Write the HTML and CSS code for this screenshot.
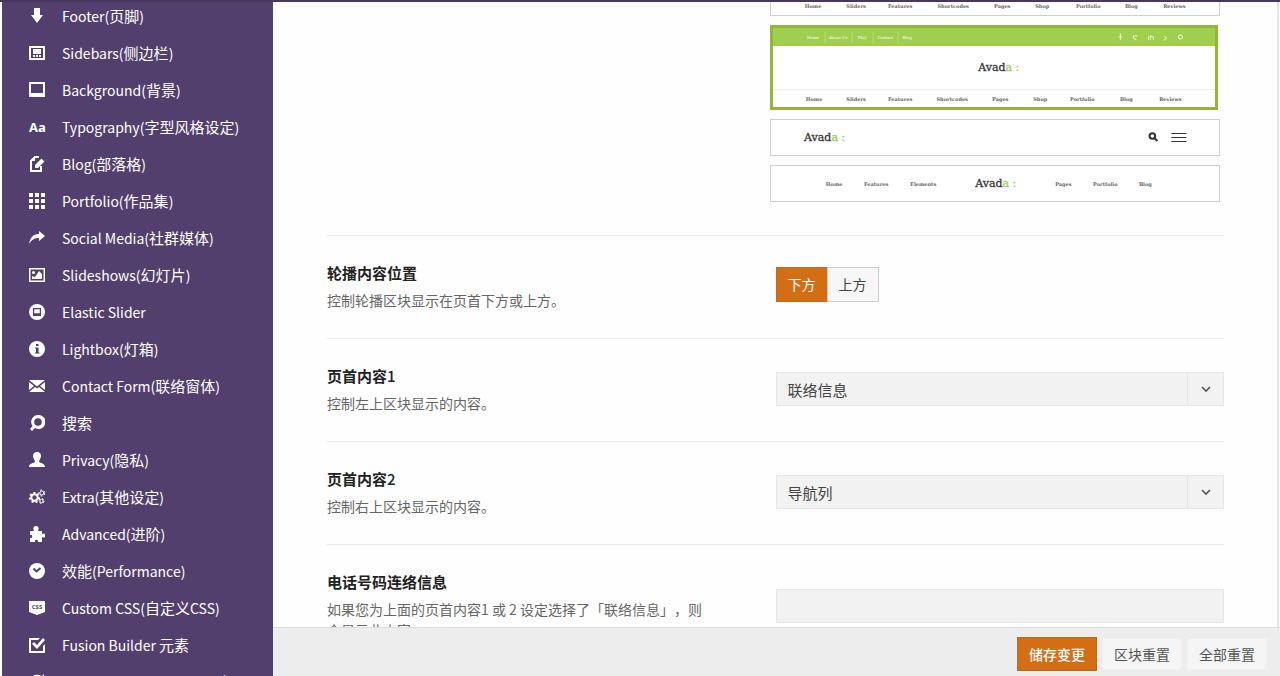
FILE: index.html
```html
<!DOCTYPE html>
<html lang="zh-CN">
<head>
<meta charset="utf-8">
<title>Avada 主题选项</title>
<link rel="stylesheet" href="styles.css">
</head>
<body>
<div class="app">
<nav class="sidebar">
<ul class="menu">
<li><a href="#footer"><svg class="icon" viewBox="0 0 16 16"><path d="M5 0h6v7h3l-6 8-6-8h3z"/></svg><span>Footer(<span class="zh">页脚</span>)</span></a></li>
<li><a href="#sidebars"><svg class="icon" viewBox="0 0 16 16"><path fill-rule="evenodd" d="M0 1h16v14H0zM2 3v10h12V3z"/><path d="M4 4h8v5H4zM4 10h2v2H4zM7 10h2v2H7zM10 10h2v2h-2z"/></svg><span>Sidebars(<span class="zh">侧边栏</span>)</span></a></li>
<li><a href="#background"><svg class="icon" viewBox="0 0 16 16"><path fill-rule="evenodd" d="M0 0h16v15H0zM2 2v9h12V2z"/></svg><span>Background(<span class="zh">背景</span>)</span></a></li>
<li><a href="#typography"><span class="icon icon-type">Aa</span><span>Typography(<span class="zh">字型风格设定</span>)</span></a></li>
<li><a href="#blog"><svg class="icon" viewBox="0 0 16 16"><path class="line" d="M10 1H6L2 5v10h10v-5"/><path d="M1 5l5-5v5z"/><path d="M12.500 2.500 15.500 5.500 9 12H6V9z"/></svg><span>Blog(<span class="zh">部落格</span>)</span></a></li>
<li><a href="#portfolio"><svg class="icon" viewBox="0 0 16 16"><path d="M0 0h4v4H0zM6 0h4v4H6zM12 0h4v4h-4zM0 6h4v4H0zM6 6h4v4H6zM12 6h4v4h-4zM0 12h4v4H0zM6 12h4v4H6zM12 12h4v4h-4z"/></svg><span>Portfolio(<span class="zh">作品集</span>)</span></a></li>
<li><a href="#social"><svg class="icon" viewBox="0 0 16 16"><path d="M10 1l6 5-6 5V8C6 8 3 9 0 14 1 8 4 4 10 4z"/></svg><span>Social Media(<span class="zh">社群媒体</span>)</span></a></li>
<li><a href="#slideshows"><svg class="icon" viewBox="0 0 16 16"><path fill-rule="evenodd" d="M0 1h16v14H0zM1.500 2.500v11h13v-11z"/><circle cx="4.500" cy="5.500" r="1.500"/><path d="M3 12V9l3 1 4-6 3 3v5z"/></svg><span>Slideshows(<span class="zh">幻灯片</span>)</span></a></li>
<li><a href="#elastic"><svg class="icon" viewBox="0 0 16 16"><path fill-rule="evenodd" d="M8 0a8 8 0 1 1 0 16A8 8 0 0 1 8 0zM4 4v8h8V4zM5.200 5.200h5.600v4H5.200z"/></svg><span>Elastic Slider</span></a></li>
<li><a href="#lightbox"><svg class="icon" viewBox="0 0 16 16"><path fill-rule="evenodd" d="M8 0a8 8 0 1 1 0 16A8 8 0 0 1 8 0zM7 3v2h2.500V3zM6 6.500v1h1v4H6v1h4.500v-1h-1v-5z"/></svg><span>Lightbox(<span class="zh">灯箱</span>)</span></a></li>
<li><a href="#contact"><svg class="icon" viewBox="0 0 16 16"><path d="M0 2h16L8 8.500zM0 4l5 4-5 4zM16 4l-5 4 5 4zM0 14l6-5 2 1.500L10 9l6 5z"/></svg><span>Contact Form(<span class="zh">联络窗体</span>)</span></a></li>
<li><a href="#search"><svg class="icon" viewBox="0 0 16 16"><path fill-rule="evenodd" d="M9 0a7 7 0 1 1-3 13l-3 3-2-2 2.500-3A7 7 0 0 1 9 0zM9 3.200a3.800 3.800 0 1 0 0 7.600 3.800 3.800 0 0 0 0-7.600z"/></svg><span class="zh">搜索</span></a></li>
<li><a href="#privacy"><svg class="icon" viewBox="0 0 16 16"><path d="M8 0c3 0 4 2 4 4 0 2-2 4-2 6 1 1 6 1 6 5H0c0-4 5-4 6-5 0-2-2-4-2-6 0-2 1-4 4-4z"/></svg><span>Privacy(<span class="zh">隐私</span>)</span></a></li>
<li><a href="#extra"><svg class="icon" viewBox="0 0 16 16"><circle class="gear" cx="5.500" cy="8.500" r="3.200"/><circle class="cog" cx="5.500" cy="8.500" r="4.600"/><circle class="gear small" cx="12.800" cy="4" r="2"/><circle class="cog small" cx="12.800" cy="4" r="3"/><circle class="gear small" cx="12.500" cy="12" r="1.700"/><circle class="cog small" cx="12.500" cy="12" r="2.500"/></svg><span>Extra(<span class="zh">其他设定</span>)</span></a></li>
<li><a href="#advanced"><svg class="icon" viewBox="0 0 16 16"><path d="M5 5c-1-2-1-5 2-5s3 3 2 5h4v3c2-1 3-1 3 1.500S15 12 13 11v5H9c1-3-4-3-3 0H1v-4c3 1 3-4 0-3V5z"/></svg><span>Advanced(<span class="zh">进阶</span>)</span></a></li>
<li><a href="#performance"><svg class="icon" viewBox="0 0 16 16"><circle cx="8" cy="8" r="8"/><path class="cut" d="M4.500 5.500 7.500 8.500 11.500 5"/></svg><span><span class="zh">效能</span>(Performance)</span></a></li>
<li><a href="#css"><svg class="icon" viewBox="0 0 16 16"><path d="M0 1h16v11l-8 3-8-3z"/><text class="css-mark" x="8" y="9" text-anchor="middle">CSS</text></svg><span>Custom CSS(<span class="zh">自定义</span>CSS)</span></a></li>
<li><a href="#builder"><svg class="icon" viewBox="0 0 16 16"><path d="M0 1h11L9 3H2v11h12V9l2-2v9H0z"/><path d="M3 7l2-2 3 3 6-7 2 2-8 9z"/></svg><span>Fusion Builder <span class="zh">元素</span></span></a></li>
<li><a href="#import"><svg class="icon" viewBox="0 0 16 16"><path class="line" d="M13 4A6.500 6.500 0 1 0 14.500 9"/><path d="M15 0v6H9z"/></svg><span>Import / Export(<span class="zh">导入/导出</span>)</span></a></li>
</ul>
</nav>
<main class="main">
<div class="viewport">
<form class="options" id="options">
<section class="row layouts">
<div></div>
<div class="thumbs" role="radiogroup" aria-label="页首版面">
<label class="thumb"><input type="radio" name="layout" aria-label="版面 4">
<svg viewBox="0 0 448 83"><g class="nav-text"><text x="42" y="76">Home</text><text x="85" y="76">Sliders</text><text x="129" y="76">Features</text><text x="182" y="76">Shortcodes</text><text x="231" y="76">Pages</text><text x="271" y="76">Shop</text><text x="317" y="76">Portfolio</text><text x="360" y="76">Blog</text><text x="403" y="76">Reviews</text></g></svg></label>
<label class="thumb selected"><input type="radio" name="layout" aria-label="版面 5" checked>
<svg viewBox="0 0 442 79"><path class="topbar" d="M0 0h442v18H0z"/><path class="tick" d="M52 4v11M79 4v11M100 4v11M125 4v11"/><path class="rule" d="M0 61.500h442"/>
<g class="top-text"><text x="40" y="11">Home</text><text x="65" y="11">About Us</text><text x="89" y="11">FAQ</text><text x="112" y="11">Contact</text><text x="134" y="11">Blog</text></g>
<g class="social"><path d="M348 6h-1v6M345 9h4M360 7v3l3 2M360 8h4M375 8v4M377 12V8l3 1v3M391 8l2 2-2 2M390 12h1"/><circle cx="407" cy="9" r="2"/></g>
<text class="logo" x="205" y="43">Avad<tspan class="green">a :</tspan></text>
<g class="nav-text"><text x="41" y="73">Home</text><text x="83" y="73">Sliders</text><text x="127" y="73">Features</text><text x="179" y="73">Shortcodes</text><text x="227" y="73">Pages</text><text x="267" y="73">Shop</text><text x="309" y="73">Portfolio</text><text x="353" y="73">Blog</text><text x="397" y="73">Reviews</text></g></svg></label>
<label class="thumb"><input type="radio" name="layout" aria-label="版面 6">
<svg viewBox="0 0 448 35"><text class="logo" x="33" y="21">Avad<tspan class="green">a :</tspan></text><circle class="dark" cx="381" cy="16" r="2.800"/><path class="dark" d="M383 18l3 3"/><path class="bars" d="M400 13.500h15M400 17.500h15M400 21.500h15"/></svg></label>
<label class="thumb"><input type="radio" name="layout" aria-label="版面 7">
<svg viewBox="0 0 448 35"><g class="nav-text"><text x="63" y="20">Home</text><text x="105" y="20">Features</text><text x="152" y="20">Elements</text><text x="292" y="20">Pages</text><text x="334" y="20">Portfolio</text><text x="374" y="20">Blog</text></g><text class="logo" x="204" y="21">Avad<tspan class="green">a :</tspan></text></svg></label>
</div>
</section>
<section class="row">
<div class="info"><h3>轮播内容位置</h3><p>控制轮播区块显示在页首下方或上方。</p></div>
<div class="toggle" role="group" aria-label="轮播内容位置"><button type="button" class="on" aria-pressed="true">下方</button><button type="button" aria-pressed="false">上方</button></div>
</section>
<section class="row">
<div class="info"><h3><label for="top1">页首内容<span class="digit">1</span></label></h3><p>控制左上区块显示的内容。</p></div>
<div class="select"><select id="top1"><option>联络信息</option><option>导航列</option></select><svg viewBox="0 0 12 12"><path d="M2 4l4 4 4-4"/></svg></div>
</section>
<section class="row">
<div class="info"><h3><label for="top2">页首内容<span class="digit">2</span></label></h3><p>控制右上区块显示的内容。</p></div>
<div class="select"><select id="top2"><option>导航列</option><option>联络信息</option></select><svg viewBox="0 0 12 12"><path d="M2 4l4 4 4-4"/></svg></div>
</section>
<section class="row">
<div class="info"><h3><label for="phone">电话号码连络信息</label></h3><p>如果您为上面的页首内容1 或 2 设定选择了「联络信息」，则会显示此内容。</p></div>
<input class="field" id="phone" type="text">
</section>
</form>
</div>
<footer class="actions"><button type="submit" form="options" class="btn primary">储存变更</button><button type="button" class="btn">区块重置</button><button type="button" class="btn">全部重置</button></footer>
</main>
</div>
</body>
</html>
```
FILE: styles.css
```css
* { box-sizing: border-box; }

body {
  margin: 0;
  background: #fefefe;
  color: #555;
  font-family: "Noto Sans CJK SC", sans-serif;
  font-size: 15px;
}

button, select, input { font: inherit; color: inherit; }

.app {
  display: flex;
  height: 100vh;
  overflow: hidden;
  padding-left: 2px;
  border-top: 2px solid #46385f;
}

/* Sidebar */
.sidebar {
  flex: 0 0 271px;
  overflow: hidden;
  background: #533f6d;
}

.menu {
  margin: -4px 0 0;
  padding: 0;
  list-style: none;
}

.menu a {
  display: flex;
  align-items: center;
  gap: 17px;
  height: 37px;
  padding: 0 0 2px 27px;
  color: #fff;
  font-size: 14px;
  text-decoration: none;
  white-space: nowrap;
}

.zh { font-size: 15px; }

.icon {
  flex: none;
  width: 16px;
  height: 16px;
  fill: #fff;
}

.icon-type {
  font: bold 13px/16px "Open Sans", sans-serif;
}

.icon .line { fill: none; stroke: #fff; stroke-width: 2; }
.icon .cut { fill: none; stroke: #533f6d; stroke-width: 2; }
.icon .gear { fill: none; stroke: #fff; stroke-width: 2; }
.icon .cog { fill: none; stroke: #fff; stroke-width: 2; stroke-dasharray: 2 2; }
.icon .small { stroke-width: 1; }
.css-mark { fill: #533f6d; font: bold 6px "Open Sans", sans-serif; }

/* Options */
.main {
  display: flex;
  flex: 1;
  flex-direction: column;
  min-width: 0;
}

.viewport {
  flex: 1;
  min-height: 0;
  margin-right: 1px;
  overflow: hidden;
  border-right: 2px solid #e4e4e4;
}

.options {
  margin-top: -71px;
  padding: 0 53px 0 54px;
}

.row {
  display: grid;
  grid-template-columns: 1fr 1fr;
  align-items: center;
  padding: 25px 0 27px;
  border-top: 1px solid #ececec;
}

.layouts {
  padding: 0 0 33px;
  border-top: 0;
}

.info { padding-right: 64px; }

h3 {
  margin: 0 0 5px;
  color: #222;
  font-size: 15px;
  font-weight: 700;
  line-height: 24px;
}

.digit { font-weight: 500; }

p {
  margin: 0;
  color: #666;
  font-size: 14px;
  line-height: 21px;
  text-spacing-trim: space-all;
}

/* Header layout thumbnails */
.thumbs {
  display: grid;
  gap: 9px;
  margin: 0 4px 0 -6px;
}

.thumb {
  display: block;
  border: 1px solid #d0d0d0;
  background: #fff;
}

.thumb.selected {
  margin-right: 2px;
  border: 3px solid #96b43a;
}

.thumb input {
  position: absolute;
  opacity: 0;
  pointer-events: none;
}

.thumb svg { display: block; width: 100%; }

.nav-text, .top-text {
  font-family: "DejaVu Serif", serif;
  font-size: 5px;
  font-weight: bold;
  text-anchor: middle;
  fill: #666;
}

.top-text { font-size: 4px; font-weight: normal; fill: #fff; }
.logo { font-family: "DejaVu Serif", serif; font-size: 11px; fill: #333; stroke: #333; stroke-width: 0.3; }
.green { fill: #a0ce4e; stroke: #a0ce4e; }
.topbar { fill: #a0ce4e; }
.tick { stroke: #b9dc7b; }
.rule { stroke: #eee; }
.social { fill: none; stroke: #e7f4cf; }
.dark { fill: none; stroke: #333; stroke-width: 2; }
.bars { stroke: #333; }

/* Controls */
.toggle {
  display: flex;
  margin-bottom: 4px;
}

.toggle button {
  width: 52px;
  height: 35px;
  padding: 0;
  border: 1px solid #ccc;
  background: #f7f7f7;
  color: #444;
  font-size: 14px;
}

.toggle button + button { margin-left: -1px; }

.toggle .on {
  border-color: #c5691a;
  background: #d36e14;
  color: #fff;
}

.select { position: relative; }

.select select {
  display: block;
  width: 100%;
  height: 34px;
  padding: 0 48px 0 11px;
  appearance: none;
  border: 1px solid #e7e7e7;
  border-radius: 0;
  background: linear-gradient(#e6e6e6, #e6e6e6) right 35px top / 1px 100% no-repeat #f2f2f2;
  color: #444;
}

.select svg {
  position: absolute;
  top: 11px;
  right: 12px;
  width: 12px;
  height: 12px;
  fill: none;
  stroke: #555;
  stroke-width: 1.6;
  pointer-events: none;
}

.field {
  width: 100%;
  height: 34px;
  padding: 0 12px;
  border: 1px solid #e7e7e7;
  background: #f2f2f2;
}

/* Action bar */
.actions {
  display: flex;
  flex: 0 0 49px;
  align-items: center;
  justify-content: flex-end;
  gap: 5px;
  padding: 4px 13px 0 0;
  border-top: 1px solid #dedede;
  background: #ededed;
}

.btn {
  height: 32px;
  padding: 0 11px;
  border: 1px solid #f0f0f0;
  border-radius: 2px;
  background: #f5f5f5;
  font-size: 14px;
}

.primary {
  height: 34px;
  border-color: #a5731c;
  border-radius: 0;
  background: #d36e14;
  color: #fff;
  font-weight: 500;
}
```
